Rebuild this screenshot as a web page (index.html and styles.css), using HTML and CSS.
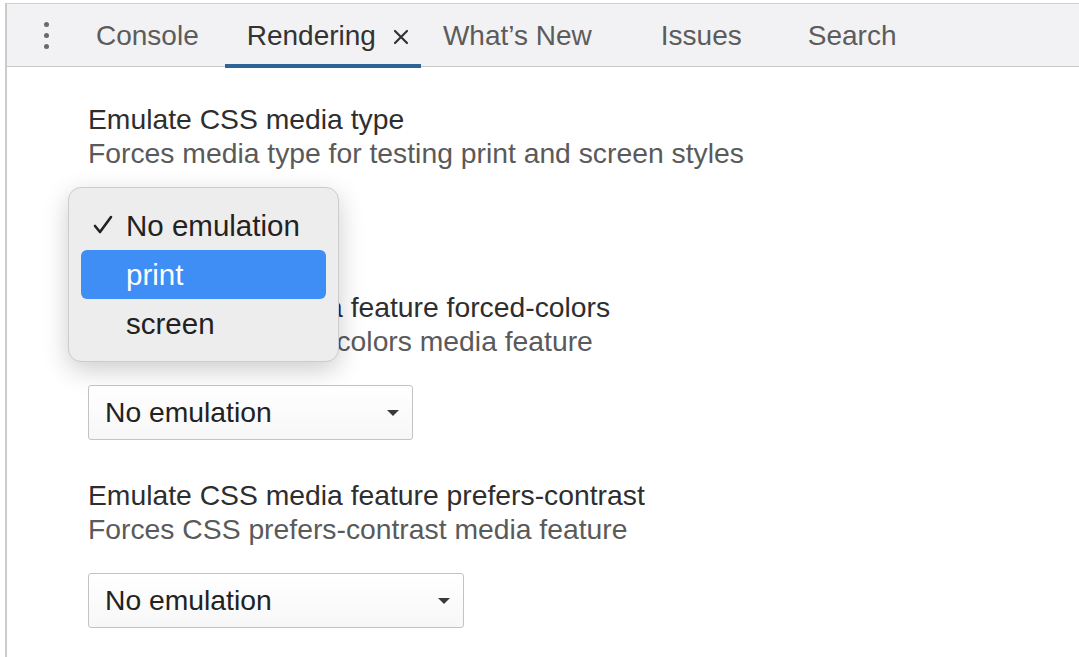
FILE: index.html
```html
<!DOCTYPE html>
<html lang="en">
  <head>
    <meta charset="UTF-8" />
    <meta name="viewport" content="width=device-width, initial-scale=1.0" />
    <title>Rendering</title>
    <link rel="stylesheet" href="styles.css">
  </head>
  <body>
    <div class="panel">
      <div class="toolbar">
        <div class="menu-btn">
          <span class="dot"></span>
          <span class="dot"></span>
          <span class="dot"></span>
        </div>
        <div class="tab tab-console">Console</div>
        <div class="tab tab-rendering active">
          <span>Rendering</span>
          <svg class="close" width="16" height="16" viewBox="0 0 16 16">
            <path d="M2 2 L14 14 M14 2 L2 14" stroke="#333" stroke-width="2.2" stroke-linecap="round" />
          </svg>
        </div>
        <div class="tab tab-news">What’s New</div>
        <div class="tab tab-issues">Issues</div>
        <div class="tab tab-search">Search</div>
      </div>

      <div class="content">
        <section class="setting">
          <div class="title">Emulate CSS media type</div>
          <div class="subtitle">Forces media type for testing print and screen styles</div>
          <div class="select-wrap">
            <div class="select select-sm">
              <span>No emulation</span>
              <span class="arrow"></span>
            </div>
            <!-- open native popup -->
            <ul class="popup">
              <li class="option">
                <svg class="check" width="22" height="22" viewBox="0 0 22 22">
                  <path d="M3 12 L8 18 L19 3" fill="none" stroke="#222" stroke-width="2.6" stroke-linecap="round" stroke-linejoin="round" />
                </svg>
                No emulation
              </li>
              <li class="option selected">print</li>
              <li class="option">screen</li>
            </ul>
          </div>
        </section>

        <section class="setting">
          <div class="title">Emulate CSS media feature forced-colors</div>
          <div class="subtitle">Forces CSS forced-colors media feature</div>
          <div class="select-wrap">
            <div class="select select-md">
              <span>No emulation</span>
              <span class="arrow"></span>
            </div>
          </div>
        </section>

        <section class="setting">
          <div class="title">Emulate CSS media feature prefers-contrast</div>
          <div class="subtitle">Forces CSS prefers-contrast media feature</div>
          <div class="select-wrap">
            <div class="select select-lg">
              <span>No emulation</span>
              <span class="arrow"></span>
            </div>
          </div>
        </section>
      </div>
    </div>
  </body>
</html>
```

FILE: styles.css
```css
body {
  margin: 0;
  font-family: "Liberation Sans", Arial, sans-serif;
  background: #ffffff;
  color: #333333;
  overflow: hidden;
}

.panel {
  margin: 3px 0 0 5px;
  border-left: 2px solid #cbcbcb;
  height: 654px;
}

.toolbar {
  display: flex;
  align-items: stretch;
  height: 62px;
  background: #f2f2f4;
  border-top: 1px solid #cfcfcf;
  border-bottom: 1px solid #c9c9c9;
  font-size: 28px;
  color: #5c5c5c;
}

.menu-btn {
  display: flex;
  flex-direction: column;
  justify-content: center;
  gap: 6px;
  padding: 0 25px 0 37px;
}

.dot {
  width: 5px;
  height: 5px;
  border-radius: 50%;
  background: #6a6a6a;
}

.tab {
  display: flex;
  align-items: center;
  padding: 3px 22px 0;
  box-sizing: border-box;
  border-bottom: 4px solid transparent;
  margin-bottom: -2px;
}

.tab.active {
  color: #333333;
  border-bottom-color: #2c6595;
}

.tab-console {
  padding-right: 26px;
}

.tab-rendering {
  padding: 3px 12px 0 22px;
}

.close {
  margin-left: 17px;
  margin-top: 2px;
}

.tab-news {
  padding: 3px 0 0 22px;
}

.tab-issues {
  padding: 3px 0 0 69px;
}

.tab-search {
  padding: 3px 0 0 66px;
}

.content {
  padding: 35px 0 0 81px;
}

.setting {
  margin-bottom: 38px;
}

.title {
  font-size: 28.3px;
  line-height: 34px;
  color: #2e2e2e;
}

.subtitle {
  font-size: 28.3px;
  line-height: 34px;
  color: #5a5a5a;
}

.select-wrap {
  position: relative;
  margin-top: 27px;
}

.select {
  display: flex;
  align-items: center;
  justify-content: space-between;
  box-sizing: border-box;
  height: 55px;
  padding: 0 13px 0 16px;
  border: 1px solid #c3c3c3;
  border-radius: 3px;
  background: linear-gradient(#ffffff, #f7f7f7);
  font-size: 28.3px;
  color: #222222;
}

.select-sm {
  width: 240px;
}

.select-md {
  width: 325px;
}

.select-lg {
  width: 376px;
}

.arrow {
  width: 0;
  height: 0;
  border-left: 6px solid transparent;
  border-right: 6px solid transparent;
  border-top: 6px solid #3a3a3a;
}

.popup {
  position: absolute;
  left: -20px;
  top: -10px;
  width: 271px;
  box-sizing: border-box;
  margin: 0;
  padding: 13px 12px;
  list-style: none;
  background: #ededed;
  border: 1px solid #cccccc;
  border-radius: 13px;
  box-shadow: 0 8px 26px rgba(0, 0, 0, 0.2);
}

.option {
  position: relative;
  height: 49px;
  line-height: 49px;
  padding-left: 45px;
  font-size: 29.5px;
  color: #222222;
  border-radius: 6px;
}

.option.selected {
  background: #3e8ef6;
  color: #ffffff;
}

.check {
  position: absolute;
  left: 11px;
  top: 13px;
}
```
